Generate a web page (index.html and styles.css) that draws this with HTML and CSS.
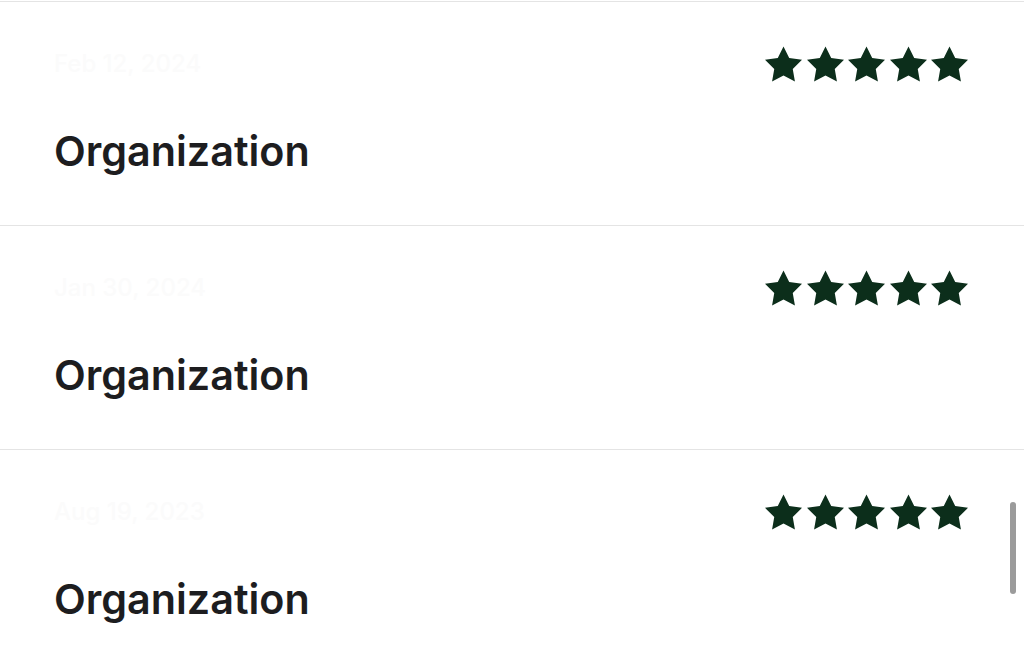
FILE: index.html
```html
<!DOCTYPE html>
<html>
<head>
    <title>Reviews</title>
    <link rel="stylesheet" href="styles.css">
</head>
<body>
    <div class="reviews">
        <div class="review">
            <div class="review-head">
                <span class="date">Feb 12, 2024</span>
                <div class="stars">
                    <svg viewBox="2 2 20 19"><path d="M12 2l3.09 6.26L22 9.27l-5 4.87 1.18 6.88L12 17.77l-6.18 3.25L7 14.14 2 9.27l6.91-1.01L12 2z"/></svg>
                    <svg viewBox="2 2 20 19"><path d="M12 2l3.09 6.26L22 9.27l-5 4.87 1.18 6.88L12 17.77l-6.18 3.25L7 14.14 2 9.27l6.91-1.01L12 2z"/></svg>
                    <svg viewBox="2 2 20 19"><path d="M12 2l3.09 6.26L22 9.27l-5 4.87 1.18 6.88L12 17.77l-6.18 3.25L7 14.14 2 9.27l6.91-1.01L12 2z"/></svg>
                    <svg viewBox="2 2 20 19"><path d="M12 2l3.09 6.26L22 9.27l-5 4.87 1.18 6.88L12 17.77l-6.18 3.25L7 14.14 2 9.27l6.91-1.01L12 2z"/></svg>
                    <svg viewBox="2 2 20 19"><path d="M12 2l3.09 6.26L22 9.27l-5 4.87 1.18 6.88L12 17.77l-6.18 3.25L7 14.14 2 9.27l6.91-1.01L12 2z"/></svg>
                </div>
            </div>
            <div class="org">Organization</div>
        </div>

        <div class="review">
            <div class="review-head">
                <span class="date">Jan 30, 2024</span>
                <div class="stars">
                    <svg viewBox="2 2 20 19"><path d="M12 2l3.09 6.26L22 9.27l-5 4.87 1.18 6.88L12 17.77l-6.18 3.25L7 14.14 2 9.27l6.91-1.01L12 2z"/></svg>
                    <svg viewBox="2 2 20 19"><path d="M12 2l3.09 6.26L22 9.27l-5 4.87 1.18 6.88L12 17.77l-6.18 3.25L7 14.14 2 9.27l6.91-1.01L12 2z"/></svg>
                    <svg viewBox="2 2 20 19"><path d="M12 2l3.09 6.26L22 9.27l-5 4.87 1.18 6.88L12 17.77l-6.18 3.25L7 14.14 2 9.27l6.91-1.01L12 2z"/></svg>
                    <svg viewBox="2 2 20 19"><path d="M12 2l3.09 6.26L22 9.27l-5 4.87 1.18 6.88L12 17.77l-6.18 3.25L7 14.14 2 9.27l6.91-1.01L12 2z"/></svg>
                    <svg viewBox="2 2 20 19"><path d="M12 2l3.09 6.26L22 9.27l-5 4.87 1.18 6.88L12 17.77l-6.18 3.25L7 14.14 2 9.27l6.91-1.01L12 2z"/></svg>
                </div>
            </div>
            <div class="org">Organization</div>
        </div>

        <div class="review">
            <div class="review-head">
                <span class="date">Aug 19, 2023</span>
                <div class="stars">
                    <svg viewBox="2 2 20 19"><path d="M12 2l3.09 6.26L22 9.27l-5 4.87 1.18 6.88L12 17.77l-6.18 3.25L7 14.14 2 9.27l6.91-1.01L12 2z"/></svg>
                    <svg viewBox="2 2 20 19"><path d="M12 2l3.09 6.26L22 9.27l-5 4.87 1.18 6.88L12 17.77l-6.18 3.25L7 14.14 2 9.27l6.91-1.01L12 2z"/></svg>
                    <svg viewBox="2 2 20 19"><path d="M12 2l3.09 6.26L22 9.27l-5 4.87 1.18 6.88L12 17.77l-6.18 3.25L7 14.14 2 9.27l6.91-1.01L12 2z"/></svg>
                    <svg viewBox="2 2 20 19"><path d="M12 2l3.09 6.26L22 9.27l-5 4.87 1.18 6.88L12 17.77l-6.18 3.25L7 14.14 2 9.27l6.91-1.01L12 2z"/></svg>
                    <svg viewBox="2 2 20 19"><path d="M12 2l3.09 6.26L22 9.27l-5 4.87 1.18 6.88L12 17.77l-6.18 3.25L7 14.14 2 9.27l6.91-1.01L12 2z"/></svg>
                </div>
            </div>
            <div class="org">Organization</div>
        </div>
    </div>

    <div class="scroll-thumb"></div>
</body>
</html>
```

FILE: styles.css
```css
body {
    margin: 0;
    background: #ffffff;
    font-family: Inter, "Noto Sans", sans-serif;
    overflow: hidden;
}
.reviews {
    padding-top: 1px;
}
.review {
    border-top: 1px solid #e4e4e4;
    height: 223px;
    padding: 0 56px 0 54px;
}
.review-head {
    display: flex;
    justify-content: space-between;
    align-items: center;
    margin-top: 43px;
    height: 37px;
}
.date {
    font-size: 24px;
    color: #fbfbfb;
    font-weight: 500;
}
.stars {
    display: flex;
    gap: 4.5px;
}
.stars svg {
    width: 37px;
    height: 36px;
    fill: #0c2e1b;
}
.org {
    margin-top: 44px;
    font-size: 41.3px;
    line-height: 50px;
    font-weight: 600;
    color: #1d1d1f;
}
.scroll-thumb {
    position: absolute;
    left: 1010px;
    top: 502px;
    width: 6px;
    height: 92px;
    border-radius: 3px;
    background: #9b9b9b;
}
```
